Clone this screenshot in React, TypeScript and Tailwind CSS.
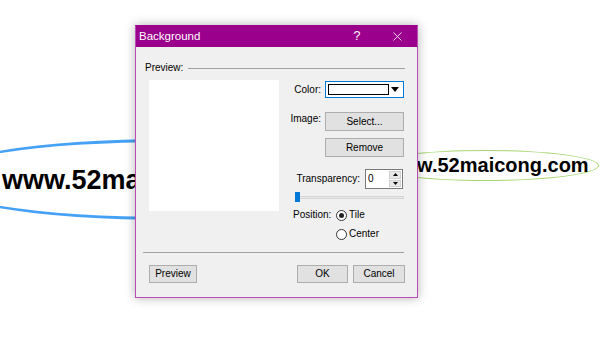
import { X } from 'lucide-react'

function Button({ label, className }: { label: string; className: string }) {
  return (
    <div
      className={`flex items-center justify-center border border-[#adadad] bg-[#e1e1e1] text-black ${className}`}
    >
      {label}
    </div>
  )
}

function Radio({ checked, label }: { checked?: boolean; label: string }) {
  return (
    <div className="flex items-center">
      <div className="flex h-[11px] w-[11px] items-center justify-center rounded-full border border-[#333] bg-white">
        {checked && <div className="h-[5px] w-[5px] rounded-full bg-[#222]" />}
      </div>
      <span className="ml-[2px]">{label}</span>
    </div>
  )
}

export default function App() {
  return (
    <div className="relative h-[344px] w-[600px] overflow-hidden bg-white font-['Liberation_Sans',Arial,sans-serif]">
      {/* mind map nodes behind the dialog */}
      <div className="absolute left-[-72px] top-[139px] h-[81px] w-[483px] rounded-[50%] border-[3px] border-[#45a1f5]" />
      <div className="absolute left-[2px] top-[167px] whitespace-nowrap text-[27px] font-bold leading-[27px] text-black">
        www.52maicong.com
      </div>
      <div className="absolute left-[372px] top-[150px] h-[31px] w-[227px] rounded-[50%] border border-[#a6d672]" />
      <div className="absolute left-[386px] top-[155px] whitespace-nowrap text-[20px] font-bold leading-[20px] text-black">
        www.52maicong.com
      </div>

      {/* Background dialog */}
      <div className="absolute left-[135px] top-[25px] flex h-[273px] w-[283px] flex-col border border-[#b94db4] border-t-[#9b008d] bg-[#f0f0f0] shadow-[0_0_10px_rgba(0,0,0,0.3)]">
        <div className="flex h-[21px] items-center bg-[#9b008d] text-white">
          <span className="pl-[3px] text-[11.5px]">Background</span>
          <span className="ml-auto w-[28px] text-center text-[12.5px]">?</span>
          <span className="ml-[11px] mr-[5px] flex w-[30px] justify-center">
            <X size={15} strokeWidth={1.3} />
          </span>
        </div>

        <div className="flex flex-col text-[10px] leading-[12px] text-black">
          <div className="ml-[9px] mr-[12px] mt-[15px] flex h-[12px] items-center">
            <span>Preview:</span>
            <div className="ml-[5px] h-px flex-1 bg-[#a0a0a0]" />
          </div>

          <div className="mt-[6px] flex">
            <div className="ml-[13px] h-[131px] w-[130px] bg-white" />

            <div className="ml-[11px] flex w-[114px] flex-col">
              <div className="mt-[1px] flex h-[17px] items-center justify-end">
                <span className="mr-[4px]">Color:</span>
                <div className="flex h-[17px] w-[79px] items-center border border-[#0078d7] bg-white">
                  <div className="ml-[2px] h-[11px] w-[61px] border border-black bg-white" />
                  <svg className="ml-auto mr-[4px]" width="8" height="5" viewBox="0 0 8 5">
                    <polygon points="0,0 8,0 4,5" fill="#000" />
                  </svg>
                </div>
              </div>

              <div className="mt-[14px] flex items-start justify-end">
                <span className="mr-[4px] mt-[1px]">Image:</span>
                <Button label="Select..." className="h-[19px] w-[79px]" />
              </div>
              <Button label="Remove" className="mt-[7px] h-[19px] w-[79px] self-end" />

              <div className="mt-[12px] flex items-center justify-end">
                <span className="mr-[5px]">Transparency:</span>
                <div className="mr-[1px] flex h-[20px] w-[38px] border border-[#7a7a7a] bg-white">
                  <span className="flex-1 pl-[2px] pt-[3px]">0</span>
                  <div className="m-[1px] flex w-[12px] flex-col gap-[1px]">
                    <div className="flex flex-1 items-center justify-center border border-[#cfcfcf] bg-[#e8e8e8]">
                      <svg width="5" height="3" viewBox="0 0 5 3">
                        <polygon points="0,3 5,3 2.5,0" fill="#000" />
                      </svg>
                    </div>
                    <div className="flex flex-1 items-center justify-center border border-[#cfcfcf] bg-[#e8e8e8]">
                      <svg width="5" height="3" viewBox="0 0 5 3">
                        <polygon points="0,0 5,0 2.5,3" fill="#000" />
                      </svg>
                    </div>
                  </div>
                </div>
              </div>

              <div className="relative ml-[5px] mt-[3px] flex h-[10px] items-center">
                <div className="h-[3px] w-full border border-[#d6d6d6] bg-[#e7e7e7]" />
                <div className="absolute left-0 top-0 h-[10px] w-[5px] bg-[#0078d7]" />
              </div>

              <div className="mt-[7px] flex h-[12px] items-center">
                <span className="w-[46px] pl-[3px]">Position:</span>
                <Radio checked label="Tile" />
              </div>
              <div className="mt-[7px] flex h-[12px] items-center pl-[46px]">
                <Radio label="Center" />
              </div>
            </div>
          </div>

          <div className="ml-[7px] mr-[13px] mt-[12px] h-px bg-[#a0a0a0]" />

          <div className="ml-[13px] mr-[12px] mt-[12px] flex">
            <Button label="Preview" className="h-[18px] w-[48px]" />
            <Button label="OK" className="ml-auto h-[18px] w-[51px]" />
            <Button label="Cancel" className="ml-[5px] h-[18px] w-[52px]" />
          </div>
        </div>
      </div>
    </div>
  )
}
